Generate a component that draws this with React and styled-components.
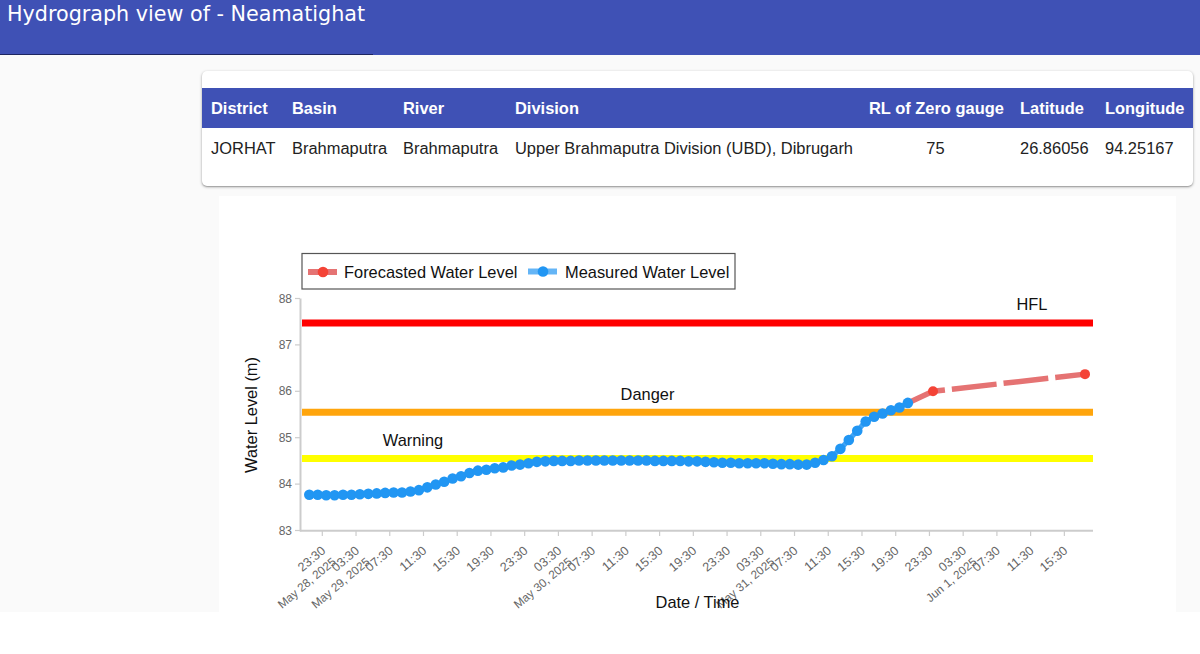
import React from "react";
import styled, { createGlobalStyle } from "styled-components";

const GlobalStyle = createGlobalStyle`
  html, body {
    margin: 0;
    padding: 0;
    background: #fff;
  }
`;

const station = {
  district: "JORHAT",
  basin: "Brahmaputra",
  river: "Brahmaputra",
  division: "Upper Brahmaputra Division (UBD), Dibrugarh",
  zeroGauge: 75,
  latitude: 26.86056,
  longitude: 94.25167,
};

const columns = [
  { label: "District", width: 81, key: "district" },
  { label: "Basin", width: 111, key: "basin" },
  { label: "River", width: 112, key: "river" },
  { label: "Division", width: 354, key: "division" },
  { label: "RL of Zero gauge", width: 151, key: "zeroGauge", center: true },
  { label: "Latitude", width: 85, key: "latitude" },
  { label: "Longitude", width: 97, key: "longitude" },
];

// hourly readings, metres
const measured = [
  83.77, 83.77, 83.76, 83.76, 83.77, 83.77, 83.78, 83.79, 83.8, 83.81, 83.82, 83.82,
  83.84, 83.87, 83.93, 83.99, 84.05, 84.12, 84.17, 84.24, 84.29, 84.31, 84.34, 84.36,
  84.4, 84.42, 84.45, 84.48, 84.49, 84.5, 84.5, 84.5, 84.51, 84.51, 84.51, 84.51,
  84.51, 84.51, 84.51, 84.51, 84.51, 84.5, 84.5, 84.5, 84.5, 84.49, 84.49, 84.48,
  84.47, 84.46, 84.46, 84.45, 84.45, 84.45, 84.45, 84.44, 84.43, 84.43, 84.42, 84.42,
  84.46, 84.52, 84.6, 84.76, 84.95, 85.15, 85.35, 85.45, 85.52, 85.59, 85.65, 85.75,
];

const ticks = [
  ["23:30", "May 28, 2025"], ["03:30", "May 29, 2025"], ["07:30"], ["11:30"], ["15:30"], ["19:30"],
  ["23:30"], ["03:30", "May 30, 2025"], ["07:30"], ["11:30"], ["15:30"], ["19:30"],
  ["23:30"], ["03:30", "May 31, 2025"], ["07:30"], ["11:30"], ["15:30"], ["19:30"],
  ["23:30"], ["03:30", "Jun 1, 2025"], ["07:30"], ["11:30"], ["15:30"],
];

const levels = [
  { label: "HFL", value: 87.47, color: "#ff0000", labelX: 1032, labelY: 310 },
  { label: "Danger", value: 85.55, color: "#ffa50c", labelX: 647.5, labelY: 400 },
  { label: "Warning", value: 84.55, color: "#ffff00", labelX: 413, labelY: 446 },
];

const yOf = (level) => 530.5 - (level - 83) * 46.4;
const xOfTick = (i) => 322.3 + i * 33.73;
const xOfReading = (i) => 309.3 + i * 8.43;

const Page = styled.div`
  font-family: "Liberation Sans", Arial, sans-serif;
  color: rgba(0, 0, 0, 0.87);
`;

const Header = styled.header`
  height: 55px;
  background: #3f51b5;
  display: flex;
  flex-direction: column;
  justify-content: space-between;
`;

const Title = styled.h1`
  margin: 0;
  padding: 1px 0 0 7px;
  font-family: "DejaVu Sans", Verdana, sans-serif;
  font-size: 20.7px;
  line-height: 26px;
  font-weight: 400;
  color: #fff;
`;

const HeaderRule = styled.div`
  width: 373px;
  height: 1px;
  background: #1d2560;
`;

const Main = styled.main`
  height: 541px;
  background: #fafafa;
  padding: 16px 7px 0 202px;
  overflow: hidden;
`;

const Card = styled.section`
  height: 115px;
  padding-top: 17px;
  box-sizing: border-box;
  background: #fff;
  border-radius: 5px;
  box-shadow: 0 1px 3px rgba(0, 0, 0, 0.35), 0 1px 1px rgba(0, 0, 0, 0.14);
`;

const Table = styled.table`
  width: 100%;
  table-layout: fixed;
  border-collapse: collapse;
  font-size: 16.45px;
`;

const HeadCell = styled.th`
  height: 40px;
  padding: 0 0 0 9px;
  background: #3f51b5;
  color: #fff;
  font-weight: 700;
  text-align: left;
  white-space: nowrap;
`;

const BodyCell = styled.td`
  height: 40px;
  padding: 0 0 0 9px;
  color: #222;
  white-space: nowrap;
  text-align: ${({ $center }) => ($center ? "center" : "left")};
  ${({ $center }) => $center && "padding: 0;"}
`;

const ChartPanel = styled.section`
  margin: 10px 17px 0 17px;
  height: 416px;
  background: #fff;
`;

const ChartSvg = styled.svg`
  display: block;
  width: 100%;
  height: 100%;
  font-family: "Liberation Sans", Arial, sans-serif;
`;

const AxisValue = styled.text`
  font-size: 12px;
  fill: #666;
`;

const TickLabel = styled.text`
  font-size: ${({ $date }) => ($date ? "11.8px" : "12.6px")};
  fill: #666;
`;

const ChartLabel = styled.text`
  font-size: 16.4px;
  fill: #111;
`;

const HydroChart = () => {
  const points = measured.map((v, i) => [xOfReading(i), yOf(v)]);
  const last = points[points.length - 1];
  return (
    <ChartSvg viewBox="219 196 957 416">
      <rect x="302" y="253.5" width="433" height="35.5" fill="#fff" stroke="#555" strokeWidth="1.2" />
      <line x1="308" x2="337" y1="272" y2="272" stroke="#e57373" strokeWidth="6" />
      <circle cx="323" cy="272" r="5.3" fill="#f44336" />
      <ChartLabel x="344" y="277.5">Forecasted Water Level</ChartLabel>
      <line x1="528" x2="557" y1="271.5" y2="271.5" stroke="#64b5f6" strokeWidth="6" />
      <circle cx="543" cy="271.5" r="5.3" fill="#2196f3" />
      <ChartLabel x="565" y="277.5">Measured Water Level</ChartLabel>

      {[83, 84, 85, 86, 87, 88].map((v) => (
        <g key={v}>
          <line x1="295" x2="300" y1={yOf(v)} y2={yOf(v)} stroke="#ccc" strokeWidth="1.2" />
          <AxisValue x="292" y={yOf(v) + 4} textAnchor="end">{v}</AxisValue>
        </g>
      ))}
      <line x1="300.5" x2="300.5" y1="298.5" y2="531.5" stroke="#ccc" strokeWidth="2" />
      <line x1="300" x2="1093" y1="530.8" y2="530.8" stroke="#ccc" strokeWidth="2" />

      {levels.map((l) => (
        <g key={l.label}>
          <line x1="302" x2="1093" y1={yOf(l.value)} y2={yOf(l.value)} stroke={l.color} strokeWidth="7" />
          <ChartLabel x={l.labelX} y={l.labelY} textAnchor="middle">{l.label}</ChartLabel>
        </g>
      ))}

      {ticks.map((lines, i) => {
        const x = xOfTick(i);
        return (
          <g key={i}>
            <line x1={x} x2={x} y1="531" y2="536" stroke="#ccc" strokeWidth="1.2" />
            <TickLabel transform={`translate(${x + 4} 552) rotate(-40)`} textAnchor="end">
              {lines[0]}
            </TickLabel>
            {lines[1] && (
              <TickLabel $date transform={`translate(${x + 14.4} 563) rotate(-40)`} textAnchor="end">
                {lines[1]}
              </TickLabel>
            )}
          </g>
        );
      })}

      <line x1={last[0]} y1={last[1]} x2="933" y2={yOf(86)} stroke="#e57373" strokeWidth="5.5" />
      <line
        x1="933"
        y1={yOf(86)}
        x2="1085"
        y2={yOf(86.37)}
        stroke="#e57373"
        strokeWidth="5.5"
        strokeDasharray="45 7"
        strokeDashoffset="33"
      />
      <circle cx="933" cy={yOf(86)} r="5" fill="#f44336" />
      <circle cx="1085" cy={yOf(86.37)} r="5" fill="#f44336" />

      <polyline points={points.join(" ")} fill="none" stroke="#42a5f5" strokeWidth="5" />
      {points.map(([x, y], i) => (
        <circle key={i} cx={x} cy={y} r="5.3" fill="#2196f3" />
      ))}

      <ChartLabel transform="translate(257 415) rotate(-90)" textAnchor="middle">Water Level (m)</ChartLabel>
      <ChartLabel x="697.5" y="608" textAnchor="middle">Date / Time</ChartLabel>
    </ChartSvg>
  );
};

const App = () => (
  <Page>
    <GlobalStyle />
    <Header>
      <Title>Hydrograph view of - Neamatighat</Title>
      <HeaderRule />
    </Header>
    <Main>
      <Card>
        <Table>
          <colgroup>
            {columns.map((c) => (
              <col key={c.key} style={{ width: c.width }} />
            ))}
          </colgroup>
          <thead>
            <tr>
              {columns.map((c) => (
                <HeadCell key={c.key}>{c.label}</HeadCell>
              ))}
            </tr>
          </thead>
          <tbody>
            <tr>
              {columns.map((c) => (
                <BodyCell key={c.key} $center={c.center}>{station[c.key]}</BodyCell>
              ))}
            </tr>
          </tbody>
        </Table>
      </Card>
      <ChartPanel>
        <HydroChart />
      </ChartPanel>
    </Main>
  </Page>
);

export default App;
